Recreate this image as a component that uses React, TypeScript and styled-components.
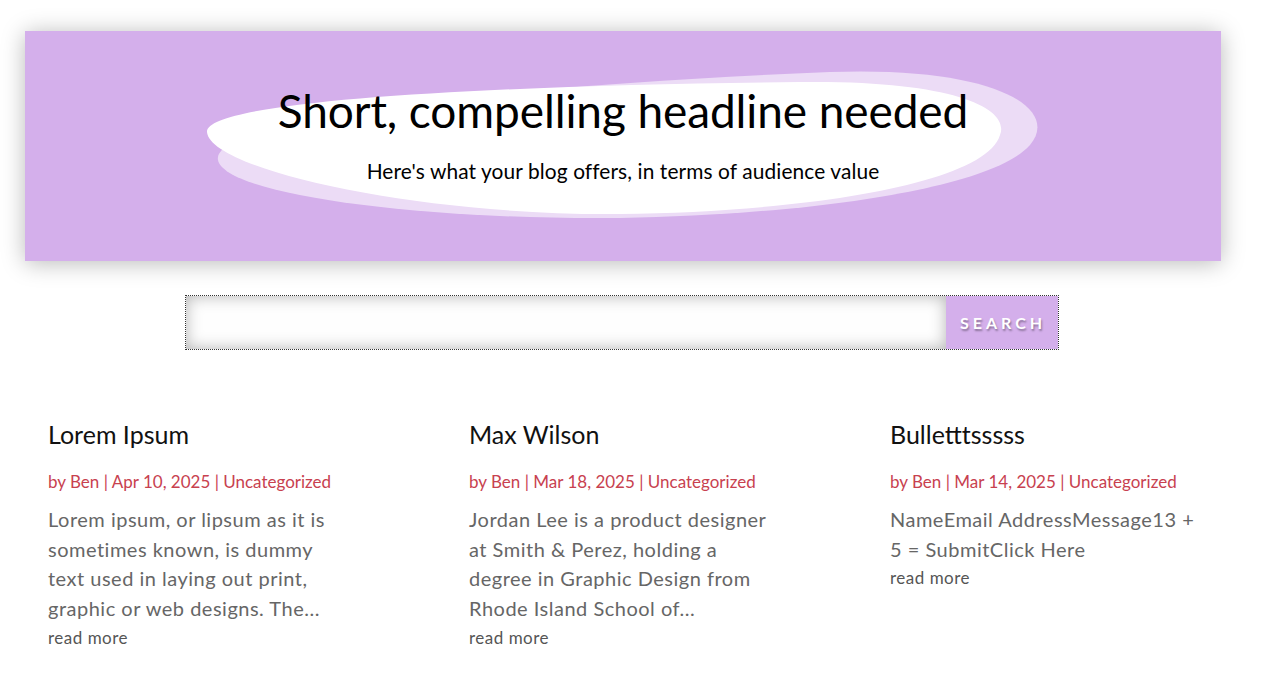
import React from 'react';
import styled, { createGlobalStyle } from 'styled-components';

const GlobalStyle = createGlobalStyle`
  body {
    margin: 0;
    background: #fff;
    font-family: "Lato", "Noto Sans", sans-serif;
  }
`

const Page = styled.div`
  padding: 31px 42px 40px 25px;
`

const Hero = styled.header`
  position: relative;
  height: 230px;
  background: #d4afeb;
  box-shadow: 0 2px 22px rgba(0, 0, 0, 0.28);
  display: flex;
  flex-direction: column;
  align-items: center;
  padding-top: 53px;
  box-sizing: border-box;
  overflow: hidden;
`

const Blob = styled.svg`
  position: absolute;
  left: 0;
  top: 0;
  width: 100%;
  height: 100%;
`

const Headline = styled.h1`
  position: relative;
  margin: 0;
  font-size: 46px;
  font-weight: 400;
  color: #000;
  line-height: 54px;
  letter-spacing: -0.1px;
`

const Subline = styled.p`
  position: relative;
  margin: 21px 0 0;
  font-size: 20.9px;
  letter-spacing: 0.1px;
  color: #000;
  line-height: 24px;
`

const SearchRow = styled.form`
  display: flex;
  width: 874px;
  height: 55px;
  margin: 34px auto 0;
  border: 1px dotted #333;
  box-sizing: border-box;
  transform: translateX(-1px);
`

const SearchInput = styled.input`
  flex: 1;
  border: none;
  outline: none;
  background: #fefefe;
  box-shadow: inset 0 0 16px rgba(0, 0, 0, 0.3);
`

const SearchButton = styled.button`
  width: 112px;
  border: none;
  background: #d4afeb;
  color: #fff;
  font-family: "Lato", sans-serif;
  font-weight: 700;
  font-size: 16px;
  letter-spacing: 4px;
  padding: 0 0 0 2px;
  text-shadow: 1px 2px 2px rgba(0, 0, 0, 0.35);
`

const Posts = styled.section`
  display: grid;
  grid-template-columns: repeat(3, 330px);
  column-gap: 91px;
  padding: 67px 0 0 23px;
`

const Post = styled.article`
  display: flex;
  flex-direction: column;
`

const Title = styled.h2`
  margin: 0;
  font-size: 25px;
  font-weight: 400;
  color: #111;
  line-height: 34px;
`

const Meta = styled.p`
  margin: 19px 0 0;
  font-size: 17px;
  color: #c8414f;
  line-height: 24px;
`

const Excerpt = styled.p`
  margin: 11px 0 0;
  width: 305.5px;
  font-size: 20px;
  letter-spacing: 0.5px;
  color: #666;
  line-height: 29.7px;
`

const ReadMore = styled.a`
  font-size: 17px;
  letter-spacing: 0.5px;
  color: #555;
  line-height: 30px;
  margin-top: -1px;
`

const posts = [
  {
    title: 'Lorem Ipsum',
    date: 'Apr 10, 2025',
    text: 'Lorem ipsum, or lipsum as it is sometimes known, is dummy text used in laying out print, graphic or web designs. The...',
  },
  {
    title: 'Max Wilson',
    date: 'Mar 18, 2025',
    text: 'Jordan Lee is a product designer at Smith & Perez, holding a degree in Graphic Design from Rhode Island School of...',
  },
  {
    title: 'Bulletttsssss',
    date: 'Mar 14, 2025',
    text: 'NameEmail AddressMessage13 + 5 = SubmitClick Here',
  },
]

function App() {
  return (
    <>
      <GlobalStyle />
      <Page>
        <Hero>
          <Blob viewBox="0 0 1196 230" preserveAspectRatio="none">
            <path
              d="M193 129 C185 89 475 54 805 41 C975 35 1035 79 1005 114 C965 159 775 184 595 187 C395 189 200 164 193 129 Z"
              fill="#ecdcf6"
            />
            <path
              d="M182 101 C180 69 475 54 775 51 C935 49 985 79 975 104 C960 154 775 181 595 183 C395 185 185 139 182 101 Z"
              fill="#fff"
            />
          </Blob>
          <Headline>Short, compelling headline needed</Headline>
          <Subline>Here's what your blog offers, in terms of audience value</Subline>
        </Hero>
        <SearchRow onSubmit={e => e.preventDefault()}>
          <SearchInput type="text" />
          <SearchButton type="submit">SEARCH</SearchButton>
        </SearchRow>
        <Posts>
          {posts.map(p => (
            <Post key={p.title}>
              <Title>{p.title}</Title>
              <Meta>by Ben | {p.date} | Uncategorized</Meta>
              <Excerpt>{p.text}</Excerpt>
              <ReadMore>read more</ReadMore>
            </Post>
          ))}
        </Posts>
      </Page>
    </>
  );
}

export default App;
